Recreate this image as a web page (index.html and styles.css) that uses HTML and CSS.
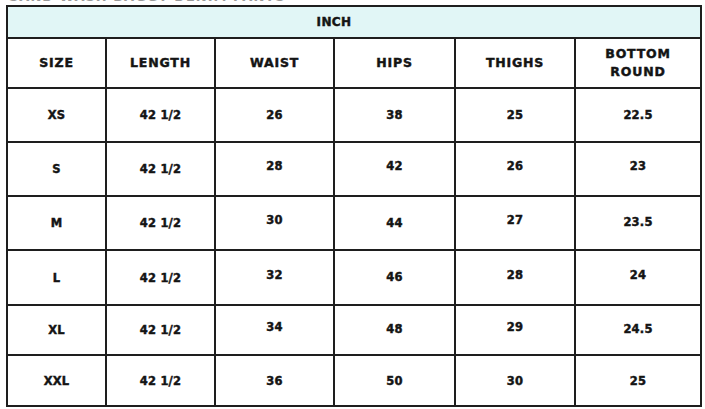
FILE: index.html
```html
<!DOCTYPE html>
<html>
<head>
<meta charset="utf-8">
<link rel="stylesheet" href="styles.css">
</head>
<body>
<div class="page">
  <div class="title">SAND WASH BAGGY DENIM PANTS</div>
  <div class="chart">
    <div class="cell unit">INCH</div>

    <div class="cell head">SIZE</div>
    <div class="cell head">LENGTH</div>
    <div class="cell head">WAIST</div>
    <div class="cell head">HIPS</div>
    <div class="cell head">THIGHS</div>
    <div class="cell head">BOTTOM<br>ROUND</div>

    <div class="cell">XS</div>
    <div class="cell">42 1/2</div>
    <div class="cell">26</div>
    <div class="cell">38</div>
    <div class="cell">25</div>
    <div class="cell">22.5</div>

    <div class="cell">S</div>
    <div class="cell">42 1/2</div>
    <div class="cell hi">28</div>
    <div class="cell hi">42</div>
    <div class="cell hi">26</div>
    <div class="cell hi">23</div>

    <div class="cell">M</div>
    <div class="cell">42 1/2</div>
    <div class="cell hi">30</div>
    <div class="cell">44</div>
    <div class="cell hi">27</div>
    <div class="cell lo">23.5</div>

    <div class="cell">L</div>
    <div class="cell">42 1/2</div>
    <div class="cell hi">32</div>
    <div class="cell lo">46</div>
    <div class="cell hi">28</div>
    <div class="cell hi">24</div>

    <div class="cell">XL</div>
    <div class="cell">42 1/2</div>
    <div class="cell hi">34</div>
    <div class="cell lo">48</div>
    <div class="cell hi">29</div>
    <div class="cell lo">24.5</div>

    <div class="cell">XXL</div>
    <div class="cell">42 1/2</div>
    <div class="cell">36</div>
    <div class="cell">50</div>
    <div class="cell">30</div>
    <div class="cell">25</div>
  </div>
</div>
</body>
</html>
```
FILE: styles.css
```css
html, body {
  margin: 0;
  padding: 0;
  background: #ffffff;
}

body {
  font-family: "DejaVu Sans", "Liberation Sans", sans-serif;
  font-weight: bold;
  color: #141414;
}

.page {
  padding-left: 6px;
  width: 696px;
}

.title {
  margin-top: -10px;
  height: 15px;
  overflow: hidden;
  font-size: 13px;
  line-height: 13px;
  letter-spacing: 1px;
  color: #9a9a9a;
  padding-left: 3px;
}

.chart {
  display: grid;
  grid-template-columns: 99px 109px 119px 121px 120px 126px;
  grid-template-rows: 32px 50px 54px 54px 54px 55px 50px 51px;
  border-top: 2px solid #1e1e1e;
  border-left: 2px solid #1e1e1e;
  width: 694px;
}

.cell {
  box-sizing: border-box;
  border-right: 2px solid #1e1e1e;
  border-bottom: 2px solid #1e1e1e;
  display: flex;
  align-items: center;
  justify-content: center;
  text-align: center;
  font-size: 11.5px;
  letter-spacing: 0.2px;
  -webkit-text-stroke: 0.45px #141414;
}

.unit {
  grid-column: 1 / -1;
  background: #e1f6f6;
  font-size: 12px;
  letter-spacing: 0.4px;
  padding-right: 40px;
}

.head {
  font-size: 12.5px;
  letter-spacing: 0.8px;
  line-height: 18px;
}

.hi {
  padding-bottom: 6px;
}

.lo {
  padding-bottom: 2px;
}
```
